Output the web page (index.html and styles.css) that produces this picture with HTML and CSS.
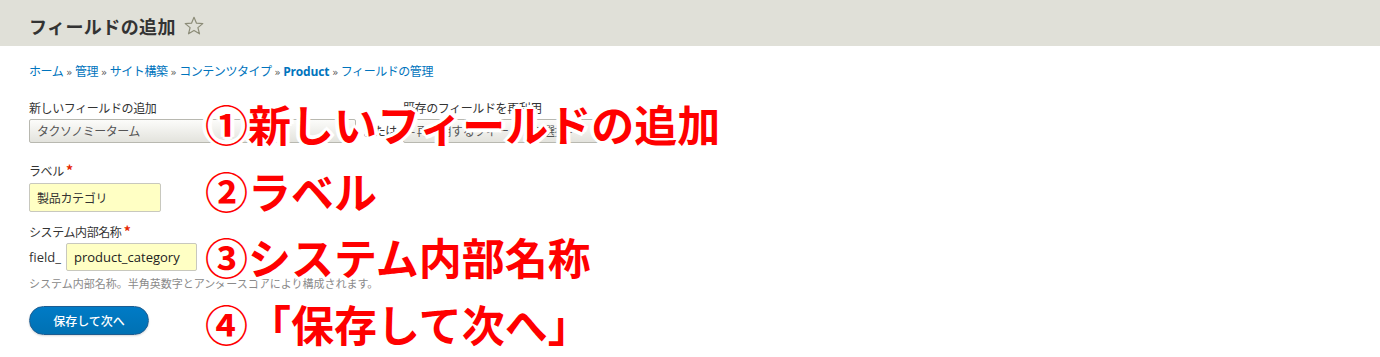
FILE: index.html
```html
<!DOCTYPE html>
<html lang="ja">
<head>
<meta charset="utf-8">
<title>フィールドの追加</title>
<link rel="stylesheet" href="styles.css">
</head>
<body>
<header class="page-header">
  <h1 class="page-title">フィールドの追加</h1>
  <svg class="star" width="20" height="20" viewBox="0 0 20 20" aria-hidden="true">
    <path d="M10 1.3 L12.5 7.2 L18.8 7.6 L13.9 11.6 L15.5 17.8 L10 14.4 L4.5 17.8 L6.1 11.6 L1.2 7.6 L7.5 7.2 Z" fill="none" stroke="#8c8c78" stroke-width="1.2" stroke-linejoin="round"/>
  </svg>
</header>
<main class="content">
  <nav class="breadcrumb">
    <a href="#">ホーム</a><span class="sep">»</span><a href="#">管理</a><span class="sep">»</span><a href="#">サイト構築</a><span class="sep">»</span><a href="#">コンテンツタイプ</a><span class="sep">»</span><a href="#" class="strong">Product</a><span class="sep">»</span><a href="#">フィールドの管理</a>
  </nav>

  <div class="field-row">
    <div class="form-item">
      <label class="label">新しいフィールドの追加</label>
      <div class="select select-new">タクソノミーターム</div>
    </div>
    <div class="or">または</div>
    <div class="form-item">
      <label class="label">既存のフィールドを再利用</label>
      <div class="select select-reuse">- 再利用するフィールドを選択 -</div>
    </div>
  </div>

  <div class="form-item item-label">
    <label class="label">ラベル <span class="req">*</span></label>
    <div class="text-input input-label">製品カテゴリ</div>
  </div>

  <div class="form-item item-machine">
    <label class="label">システム内部名称 <span class="req">*</span></label>
    <div class="machine-row">
      <span class="prefix">field_</span>
      <div class="text-input input-machine">product_category</div>
    </div>
    <div class="description">システム内部名称。半角英数字とアンダースコアにより構成されます。</div>
  </div>

  <div class="actions">
    <button class="button-primary" type="button">保存して次へ</button>
  </div>
</main>

<div class="annotations">
  <div class="note">①新しいフィールドの追加</div>
  <div class="note">②ラベル</div>
  <div class="note">③システム内部名称</div>
  <div class="note">④「保存して次へ」</div>
</div>
</body>
</html>
```

FILE: styles.css
```css
html, body {
  margin: 0;
  padding: 0;
  background: #ffffff;
}

body {
  font-family: "Noto Sans CJK JP", "Noto Sans", sans-serif;
  color: #333333;
  font-size: 12px;
  position: relative;
  width: 1380px;
  height: 357px;
  overflow: hidden;
}

.page-header {
  height: 46px;
  background: #e0e0d8;
  display: flex;
  align-items: center;
  padding-left: 29px;
  box-sizing: border-box;
}

.page-title {
  margin: 0;
  font-size: 18px;
  font-weight: 700;
  color: #333333;
  letter-spacing: 0.4px;
  line-height: 24px;
  padding-top: 5px;
}

.star {
  margin-left: 8px;
  margin-top: 6px;
}

.content {
  padding: 0 29px;
}

.breadcrumb {
  margin-top: 16px;
  line-height: 18px;
  font-size: 12px;
  letter-spacing: -0.45px;
  white-space: nowrap;
}

.breadcrumb a {
  color: #0074bd;
  text-decoration: none;
}

.breadcrumb a.strong {
  font-family: "Open Sans", "Noto Sans", sans-serif;
  font-weight: 700;
  letter-spacing: -0.2px;
  font-size: 12px;
}

.breadcrumb .sep {
  color: #555555;
  margin: 0 3px;
  font-family: "DejaVu Sans", sans-serif;
  font-size: 10px;
}

.field-row {
  display: flex;
  align-items: flex-start;
  margin-top: 17px;
}

.label {
  display: block;
  line-height: 18px;
  font-size: 12px;
  color: #333333;
  letter-spacing: -0.4px;
}

.req {
  color: #e62600;
  font-size: 14px;
  font-weight: 700;
}

.select {
  margin-top: 2px;
  height: 24px;
  box-sizing: border-box;
  border: 1px solid #b8b8b0;
  border-radius: 2px;
  background: linear-gradient(#fcfcfa, #e3e3dd);
  color: #555555;
  font-size: 12px;
  line-height: 22px;
  padding-left: 7px;
  letter-spacing: -0.5px;
  white-space: nowrap;
  overflow: hidden;
}

.select-new {
  width: 327px;
}

.select-reuse {
  width: 200px;
}

.or {
  margin-top: 20px;
  width: 47px;
  text-align: center;
  line-height: 24px;
  color: #333333;
  letter-spacing: -0.5px;
}

.item-label {
  margin-top: 18px;
}

.text-input {
  box-sizing: border-box;
  background: #ffffc4;
  border: 1px solid #c8c8be;
  border-radius: 2px;
  color: #333333;
  white-space: nowrap;
}

.input-label {
  margin-top: 3px;
  width: 132px;
  height: 29px;
  line-height: 27px;
  padding-left: 7px;
  font-size: 12px;
  letter-spacing: -0.3px;
}

.item-machine {
  margin-top: 10px;
}

.machine-row {
  display: flex;
  align-items: center;
  margin-top: 2px;
}

.prefix {
  font-family: "Open Sans", "Liberation Sans", sans-serif;
  font-size: 13px;
  color: #333333;
  width: 37px;
}

.input-machine {
  width: 131px;
  height: 28px;
  line-height: 26px;
  padding-left: 7px;
  font-family: "Open Sans", "Liberation Sans", sans-serif;
  font-size: 13px;
  color: #222222;
}

.description {
  margin-top: 4px;
  line-height: 16px;
  font-size: 11px;
  color: #8a8a8a;
  letter-spacing: 0;
  white-space: nowrap;
}

.actions {
  margin-top: 15px;
}

.button-primary {
  width: 120px;
  height: 29px;
  border: 1px solid #1e5c90;
  border-radius: 20px;
  background: linear-gradient(#007bc6, #0071b3);
  color: #ffffff;
  font-family: "Noto Sans CJK JP", sans-serif;
  font-size: 12px;
  font-weight: 500;
  letter-spacing: 0;
  padding: 0;
  cursor: pointer;
  box-shadow: 0 1px 2px rgba(0, 0, 0, 0.15);
}

.annotations {
  position: absolute;
  left: 205px;
  top: 90px;
  font-family: "Noto Sans CJK JP", sans-serif;
  font-weight: 700;
  font-size: 43px;
  line-height: 66.7px;
  color: #ff0000;
  white-space: nowrap;
}

.note {
  text-shadow:
    3px 0 #fff, -3px 0 #fff, 0 3px #fff, 0 -3px #fff,
    2px 2px #fff, -2px 2px #fff, 2px -2px #fff, -2px -2px #fff,
    4px 0 #fff, -4px 0 #fff, 0 4px #fff, 0 -4px #fff;
}
```
